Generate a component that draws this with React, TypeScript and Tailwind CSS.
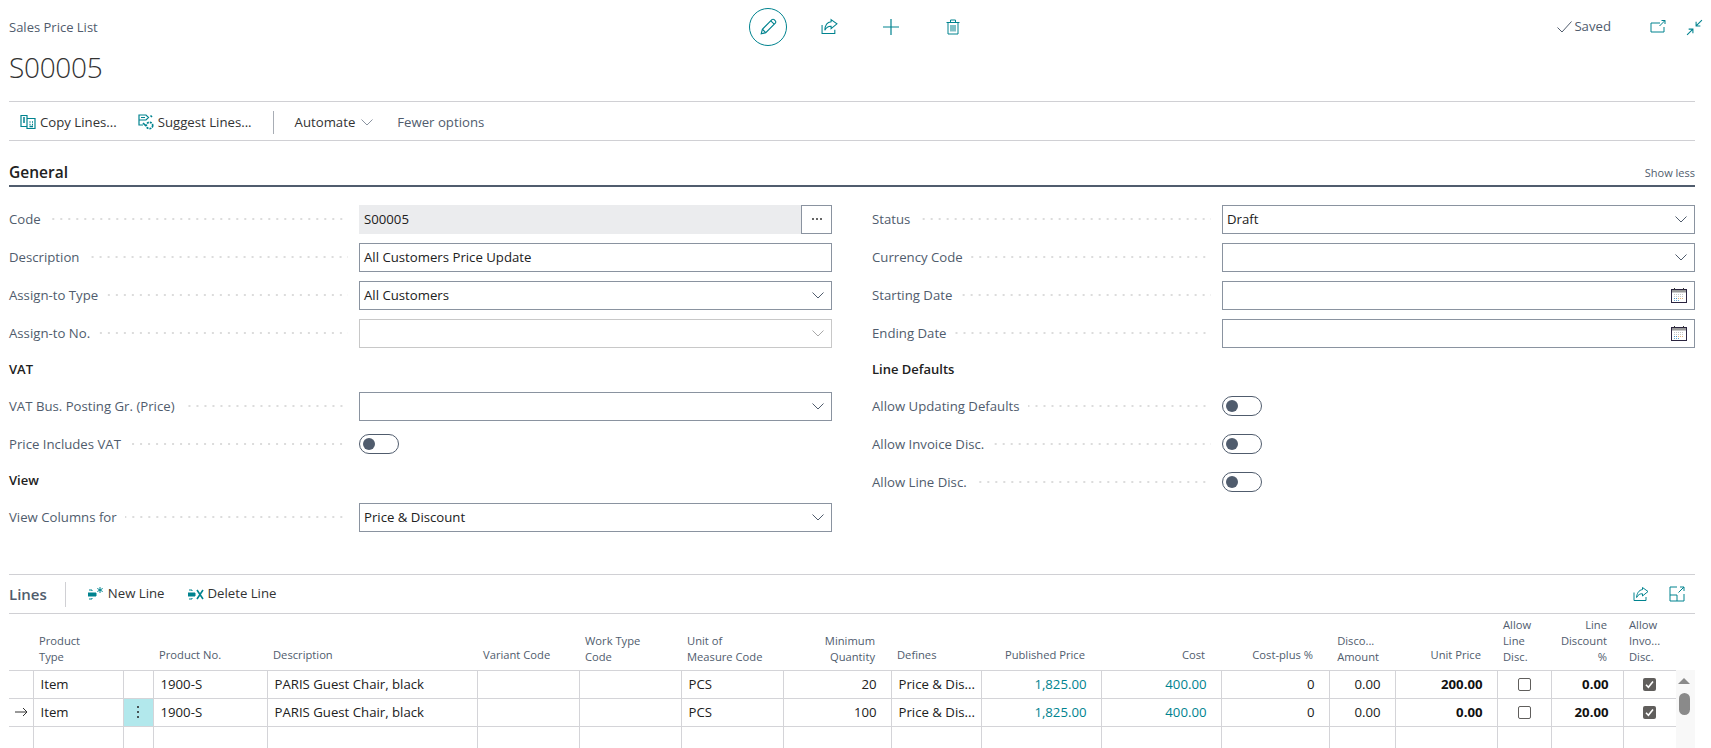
import type { ReactNode } from "react";

const teal = "#00838f";

function Icon({ size = 16, children, className }: { size?: number; children: ReactNode; className?: string }) {
  return (
    <svg
      width={size}
      height={size}
      viewBox="0 0 16 16"
      fill="none"
      stroke={teal}
      strokeWidth="1"
      className={className}
    >
      {children}
    </svg>
  );
}

function Chevron({ size = 12, color = "#505c6d" }: { size?: number; color?: string }) {
  return (
    <svg width={size} height={size} viewBox="0 0 12 12" fill="none" stroke={color} strokeWidth="1">
      <path d="M0.5 3.5 6 9 11.5 3.5" />
    </svg>
  );
}

function ShareIcon({ size = 16 }: { size?: number }) {
  return (
    <Icon size={size}>
      <path d="M1 6.5V14.5H13V11" />
      <path d="M9.5 1.5 15 5.5 9.5 10V7.8C7 7.6 5.2 8.6 3.6 11.5 3.8 7.5 5.8 4 9.5 3.6Z" />
    </Icon>
  );
}

function CalendarIcon() {
  return (
    <svg width="16" height="15" viewBox="0 0 16 15" fill="none">
      <rect x="0.5" y="1.5" width="15" height="13" stroke="#2b2440" />
      <rect x="1" y="2" width="14" height="2.5" fill="#9a9a9a" />
      <path d="M3.5 0v2M12.5 0v2" stroke="#333" />
      <path d="M3 6.5h10M3 8.5h10" stroke="#c6c6c6" strokeDasharray="1 1" />
      <path d="M3 10.5h3" stroke="#4a90c2" strokeDasharray="1 1" />
      <path d="M7 10.5h6" stroke="#e3b27a" strokeDasharray="1 1" />
      <path d="M3 12.5h6" stroke="#6aa7d0" strokeDasharray="1 1" />
    </svg>
  );
}

function ToolbarButton({ icon, label, muted }: { icon?: ReactNode; label: string; muted?: boolean }) {
  return (
    <div className={`flex items-center gap-[4px] text-[13.2px] ${muted ? "text-[#505c6d]" : "text-[#333]"}`}>
      {icon}
      <span>{label}</span>
    </div>
  );
}

function FieldLabel({ text }: { text: string }) {
  return (
    <div className="flex w-[350px] shrink-0 items-center pr-[11px]">
      <span className="whitespace-nowrap pt-[2px] text-[13.2px] text-[#505c6d]">{text}</span>
      <span className="ml-[8px] h-[2px] flex-1 bg-[linear-gradient(to_right,#dcdcdc_2px,transparent_2px)] bg-[length:8px_2px] bg-right" />
    </div>
  );
}

function FieldRow({ label, children }: { label: string; children: ReactNode }) {
  return (
    <div className="flex h-[38px] items-center">
      <FieldLabel text={label} />
      <div className="flex-1">{children}</div>
    </div>
  );
}

function TextBox({ value, disabled, right }: { value?: string; disabled?: boolean; right?: ReactNode }) {
  return (
    <div
      className={`flex h-[29px] items-center justify-between border pl-[4px] pr-[7px] text-[13.2px] text-[#212121] ${
        disabled ? "border-[#c8c8c8]" : "border-[#8a93a0]"
      }`}
    >
      <span className="pt-px">{value}</span>
      {right}
    </div>
  );
}

function Select({ value, disabled }: { value?: string; disabled?: boolean }) {
  return <TextBox value={value} disabled={disabled} right={<Chevron color={disabled ? "#a8a8a8" : "#505c6d"} />} />;
}

function CodeBox() {
  return (
    <div className="flex h-[29px]">
      <div className="flex flex-1 items-center bg-[#ebecee] pl-[5px] pt-px text-[13.2px] text-[#212121]">S00005</div>
      <div className="flex w-[31px] items-center justify-center gap-[2px] border border-[#8a93a0]">
        <span className="h-[2px] w-[2px] rounded-full bg-[#333]" />
        <span className="h-[2px] w-[2px] rounded-full bg-[#333]" />
        <span className="h-[2px] w-[2px] rounded-full bg-[#333]" />
      </div>
    </div>
  );
}

function Toggle() {
  return (
    <div className="flex h-[20px] w-[40px] items-center rounded-full border border-[#505c6d] pl-[3px]">
      <span className="h-[12px] w-[12px] rounded-full bg-[#505c6d]" />
    </div>
  );
}

function SubHeading({ text }: { text: string }) {
  return (
    <div className="flex h-[35px] items-center pt-px text-[13px] font-semibold text-[#212121]">{text}</div>
  );
}

function Check({ checked }: { checked?: boolean }) {
  if (checked) {
    return (
      <span className="mx-auto flex h-[13px] w-[13px] items-center justify-center rounded-[2px] bg-[#605e5c]">
        <svg width="9" height="9" viewBox="0 0 9 9" fill="none" stroke="white" strokeWidth="1.6">
          <path d="M1 4.8 3.4 7.2 8 1.6" />
        </svg>
      </span>
    );
  }
  return <span className="mx-auto block h-[13px] w-[13px] rounded-[2px] border border-[#605e5c]" />;
}

const widths = [24, 90, 30, 114, 210, 102, 102, 102, 108, 90, 120, 120, 108, 66, 102, 54, 72, 53];

const rows = [
  { qty: "20", unit: "200.00", disc: "0.00", current: false },
  { qty: "100", unit: "0.00", disc: "20.00", current: true },
];

const th = "px-[6px] pb-[5px] align-bottom text-left text-[11.2px] font-normal leading-[16px] text-[#505c6d]";
const thOne = "px-[6px] pb-[7px] align-bottom text-left text-[11.2px] font-normal leading-[16px] text-[#505c6d]";
const thRight = "pl-[6px] pr-[16px] pb-[5px] align-bottom text-right text-[11.2px] font-normal leading-[16px] text-[#505c6d]";
const thRightOne = "pl-[6px] pr-[16px] pb-[7px] align-bottom text-right text-[11.2px] font-normal leading-[16px] text-[#505c6d]";
const td = "h-[28px] border-b border-l border-[#d4d4d8] pl-[7px] pr-[4px] pt-[2px] text-[13.2px] text-[#212121] whitespace-nowrap overflow-hidden";
const tdRight = "h-[28px] border-b border-l border-[#d4d4d8] pl-[4px] pr-[14px] pt-[2px] text-right text-[13.2px] text-[#212121] whitespace-nowrap";
const tdLink = "h-[28px] border-b border-l border-[#d4d4d8] pl-[4px] pr-[14px] pt-[2px] text-right text-[13.2px] text-[#00838f] whitespace-nowrap";
const tdBold = "h-[28px] border-b border-l border-[#d4d4d8] pl-[4px] pr-[14px] pt-[2px] text-right text-[13.2px] font-bold text-[#111] whitespace-nowrap";
const tdEmpty = "h-[28px] border-l border-[#d4d4d8]";

function LinesTable() {
  return (
    <table className="w-[1667px] table-fixed border-collapse">
      <colgroup>
        {widths.map((w, i) => (
          <col key={i} style={{ width: w }} />
        ))}
      </colgroup>
      <thead>
        <tr className="h-[56px] border-b border-[#d4d4d8]">
          <th />
          <th className={th}>Product<br />Type</th>
          <th />
          <th className={thOne}>Product No.</th>
          <th className={thOne}>Description</th>
          <th className={thOne}>Variant Code</th>
          <th className={th}>Work Type<br />Code</th>
          <th className={th}>Unit of<br />Measure Code</th>
          <th className={thRight}>Minimum<br />Quantity</th>
          <th className={thOne}>Defines</th>
          <th className={thRightOne}>Published Price</th>
          <th className={thRightOne}>Cost</th>
          <th className={thRightOne}>Cost-plus %</th>
          <th className={thRight}>
            <span className="inline-block text-left">Disco...<br />Amount</span>
          </th>
          <th className={thRightOne}>Unit Price</th>
          <th className={th}>Allow<br />Line<br />Disc.</th>
          <th className={thRight}>Line<br />Discount<br />%</th>
          <th className={th}>Allow<br />Invo...<br />Disc.</th>
        </tr>
      </thead>
      <tbody>
        {rows.map((r) => (
          <tr key={r.qty}>
            <td className="h-[28px] border-b border-[#d4d4d8] pl-[6px]">
              {r.current && (
                <svg width="13" height="10" viewBox="0 0 13 10" fill="none" stroke="#333" strokeWidth="1">
                  <path d="M0 5h12M8 1l4 4-4 4" />
                </svg>
              )}
            </td>
            <td className={td}>Item</td>
            <td className={`h-[28px] border-b border-l border-[#d4d4d8] ${r.current ? "bg-[#b2e8ec]" : ""}`}>
              {r.current && (
                <span className="flex flex-col items-center gap-[3px]">
                  <span className="h-[2px] w-[2px] rounded-full bg-[#222]" />
                  <span className="h-[2px] w-[2px] rounded-full bg-[#222]" />
                  <span className="h-[2px] w-[2px] rounded-full bg-[#222]" />
                </span>
              )}
            </td>
            <td className={td}>1900-S</td>
            <td className={td}>PARIS Guest Chair, black</td>
            <td className={td} />
            <td className={td} />
            <td className={td}>PCS</td>
            <td className={tdRight}>{r.qty}</td>
            <td className={td}>Price &amp; Dis...</td>
            <td className={tdLink}>1,825.00</td>
            <td className={tdLink}>400.00</td>
            <td className={tdRight}>0</td>
            <td className={tdRight}>0.00</td>
            <td className={tdBold}>{r.unit}</td>
            <td className="h-[28px] border-b border-l border-[#d4d4d8]"><Check /></td>
            <td className={tdBold}>{r.disc}</td>
            <td className="h-[28px] border-b border-l border-[#d4d4d8]"><Check checked /></td>
          </tr>
        ))}
        <tr>
          <td className="h-[28px]" />
          {widths.slice(1).map((_, i) => (
            <td key={i} className={tdEmpty} />
          ))}
        </tr>
      </tbody>
    </table>
  );
}

export default function App() {
  return (
    <div className="h-[748px] w-[1711px] overflow-hidden bg-white pl-[9px] pr-[16px] font-['Open_Sans','Noto_Sans',sans-serif]">
      {/* page header */}
      <div className="flex h-[102px] border-b border-[#d0d0d4]">
        <div className="w-[650px] pt-[18px]">
          <div className="text-[13px] leading-[18px] text-[#505c6d]">Sales Price List</div>
          <div className="mt-[12px] text-[28px] font-light leading-[38px] tracking-[-0.3px] text-[#333]">S00005</div>
        </div>
        <div className="ml-[90px] flex h-[54px] items-center">
          <div className="flex h-[38px] w-[38px] items-center justify-center rounded-full border border-[#00838f]">
            <Icon size={18}>
              <path d="M2 14l1-4L11.5 1.5a1.4 1.4 0 0 1 2 0l1 1a1.4 1.4 0 0 1 0 2L6 13Z" />
              <path d="M3 10l3 3M10.5 2.5l3 3" />
            </Icon>
          </div>
          <div className="ml-[34px] -mt-[2px]"><ShareIcon size={17} /></div>
          <div className="ml-[45px]">
            <Icon size={16}><path d="M8 0v16M0 8h16" strokeWidth="1.2" /></Icon>
          </div>
          <div className="ml-[46px]">
            <Icon size={16}>
              <path d="M1.5 3.5h13M5.5 3.5V1h5v2.5M3 3.5V15h10V3.5M6 6v6.5M8 6v6.5M10 6v6.5" />
            </Icon>
          </div>
        </div>
        <div className="ml-auto -mr-[8px] flex h-[54px] items-center">
          <svg width="15" height="12" viewBox="0 0 15 12" fill="none" stroke="#505c6d" strokeWidth="1">
            <path d="M0.5 6.5 5 11 14.5 0.5" />
          </svg>
          <span className="ml-[2px] text-[13.2px] text-[#505c6d]">Saved</span>
          <div className="ml-[39px]">
            <Icon size={16}>
              <path d="M10 4H1v9h13V8" />
              <path d="M9.5 7 15 1.5M11.5 1.5H15V5" />
            </Icon>
          </div>
          <div className="ml-[20px]">
            <Icon size={17}>
              <path d="M1 15l5.5-5.5M2.5 9.5h4v4" />
              <path d="M15 1 9.5 6.5M13.5 6.5h-4v-4" />
            </Icon>
          </div>
        </div>
      </div>

      {/* action bar */}
      <div className="flex h-[39px] items-center border-b border-[#d0d0d4] pl-[11px] pt-[3px]">
        <ToolbarButton
          label="Copy Lines..."
          icon={
            <Icon size={16}>
              <path d="M1 1.5h6v11H1zM7 4.5h8v10H7z" strokeWidth="1.2" />
              <path d="M3 4h2M3 6h2M3 8h2M9.5 8h1M12 8h1M9.5 10.5h1M12 10.5h1M9.5 12.5h3.5" strokeWidth="1.4" />
            </Icon>
          }
        />
        <div className="ml-[21px]">
          <ToolbarButton
            label="Suggest Lines..."
            icon={
              <Icon size={16}>
                <path d="M1 1h7l2.5 2.5L8 6H1zM1 6v5h4" strokeWidth="1.2" />
                <path d="M3 3.5h4" />
                <circle cx="11.5" cy="11.5" r="3.2" strokeDasharray="2 1" strokeWidth="1.7" />
                <path d="M12.5 1.5l1.5 1.5M5 9l3 3" strokeWidth="1.6" />
              </Icon>
            }
          />
        </div>
        <div className="ml-[21px] h-[23px] w-px bg-[#a8adb5]" />
        <div className="ml-[21px] flex items-center gap-[6px] text-[13.2px] text-[#333]">
          <span>Automate</span>
          <Chevron color="#8a93a0" />
        </div>
        <div className="ml-[24px]"><ToolbarButton label="Fewer options" muted /></div>
      </div>

      {/* General */}
      <div className="flex h-[46px] items-end justify-between border-b-2 border-[#505c6d] pb-[1px]">
        <span className="text-[15.5px] font-semibold leading-[24px] text-[#212121]">General</span>
        <span className="pb-[3px] text-[11px] leading-[16px] text-[#505c6d]">Show less</span>
      </div>

      <div className="mt-[13px] flex h-[374px] gap-[40px]">
        <div className="w-[823px]">
          <FieldRow label="Code"><CodeBox /></FieldRow>
          <FieldRow label="Description"><TextBox value="All Customers Price Update" /></FieldRow>
          <FieldRow label="Assign-to Type"><Select value="All Customers" /></FieldRow>
          <FieldRow label="Assign-to No."><Select disabled /></FieldRow>
          <SubHeading text="VAT" />
          <FieldRow label="VAT Bus. Posting Gr. (Price)"><Select /></FieldRow>
          <FieldRow label="Price Includes VAT"><Toggle /></FieldRow>
          <SubHeading text="View" />
          <FieldRow label="View Columns for"><Select value="Price &amp; Discount" /></FieldRow>
        </div>
        <div className="w-[823px]">
          <FieldRow label="Status"><Select value="Draft" /></FieldRow>
          <FieldRow label="Currency Code"><Select /></FieldRow>
          <FieldRow label="Starting Date"><TextBox right={<CalendarIcon />} /></FieldRow>
          <FieldRow label="Ending Date"><TextBox right={<CalendarIcon />} /></FieldRow>
          <SubHeading text="Line Defaults" />
          <FieldRow label="Allow Updating Defaults"><Toggle /></FieldRow>
          <FieldRow label="Allow Invoice Disc."><Toggle /></FieldRow>
          <FieldRow label="Allow Line Disc."><Toggle /></FieldRow>
        </div>
      </div>

      {/* Lines */}
      <div className="box-content flex h-[38px] items-center border-y border-[#d0d0d4]">
        <span className="text-[15px] font-semibold text-[#505c6d]">Lines</span>
        <div className="ml-[18px] h-[25px] w-px bg-[#d0d0d4]" />
        <div className="ml-[22px]">
          <ToolbarButton
            label="New Line"
            icon={
              <Icon size={16}>
                <path d="M1 4h3M1 13h3M4 4v1M4 12v1" />
                <path d="M0 7h8v3H0z" fill={teal} />
                <path d="M12 1v6M9.3 2.5l5.4 3M14.7 2.5l-5.4 3" />
              </Icon>
            }
          />
        </div>
        <div className="ml-[23px]">
          <ToolbarButton
            label="Delete Line"
            icon={
              <Icon size={16}>
                <path d="M1 4h3M1 13h3M4 4v1M4 12v1" />
                <path d="M0 7h7v3H0z" fill={teal} />
                <path d="M9 4l6 9M15 4l-6 9" strokeWidth="1.6" />
              </Icon>
            }
          />
        </div>
        <div className="ml-auto flex items-center gap-[20px] pr-[10px]">
          <ShareIcon />
          <Icon size={16}>
            <path d="M8 1H1v14h14V8" />
            <path d="M1 9h7v6" />
            <path d="M9.5 6.5 15 1M11 1h4v4" />
          </Icon>
        </div>
      </div>

      <div className="flex items-start">
        <LinesTable />
        <div className="relative mt-[56px] h-[78px] flex-1 bg-[#f8f8f8]">
          <span className="absolute left-[2px] top-[8px] h-0 w-0 border-x-[6px] border-b-[6px] border-x-transparent border-b-[#8a8a8a]" />
          <span className="absolute left-[3px] top-[23px] h-[22px] w-[11px] rounded-full bg-[#8a8a8a]" />
        </div>
      </div>
    </div>
  );
}
